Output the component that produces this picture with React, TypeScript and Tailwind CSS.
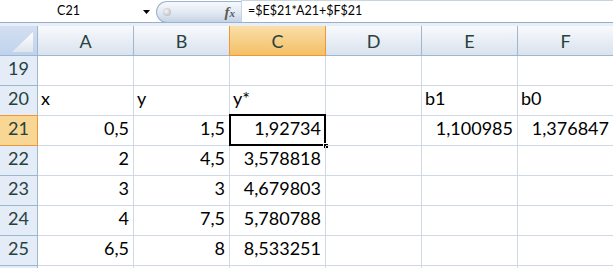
const cols = ["A", "B", "C", "D", "E", "F"];

const rows: { n: number; cells: string[] }[] = [
  { n: 19, cells: ["", "", "", "", "", ""] },
  { n: 20, cells: ["x", "y", "y*", "", "b1", "b0"] },
  { n: 21, cells: ["0,5", "1,5", "1,92734", "", "1,100985", "1,376847"] },
  { n: 22, cells: ["2", "4,5", "3,578818", "", "", ""] },
  { n: 23, cells: ["3", "3", "4,679803", "", "", ""] },
  { n: 24, cells: ["4", "7,5", "5,780788", "", "", ""] },
  { n: 25, cells: ["6,5", "8", "8,533251", "", "", ""] },
];

const isNum = (s: string) => /^[\d,]+$/.test(s);

function FormulaBar() {
  return (
    <div className="flex h-[23px] border-b border-[#9aafca] bg-white">
      <div className="flex w-[156px] shrink-0 items-center">
        <div className="w-[137px] text-center text-[12.5px] text-black">C21</div>
        <svg width="7" height="4" viewBox="0 0 7 4" className="ml-[6px] mt-[1px]">
          <polygon points="0,0 7,0 3.5,4" fill="#000" />
        </svg>
      </div>
      <div className="relative mt-[1px] flex h-[22px] w-[85px] shrink-0 items-center rounded-l-[11px] border border-r-0 border-[#9fb2cb] bg-linear-to-b from-[#f6f9fc] via-[#e3eaf4] to-[#c5d3e6]">
        <div className="ml-[6px] h-[8px] w-[8px] rounded-full bg-[radial-gradient(circle_at_40%_40%,#f6f6f6,#a9adb3)]" />
        <div className="ml-auto mr-[6px] font-['Liberation_Serif',serif] text-[15px] font-bold italic leading-none text-[#5a5a5a]">
          f<span className="text-[11px]">x</span>
        </div>
      </div>
      <div className="flex flex-1 items-center border-t border-l border-[#c9d4e3] pl-[6px] text-[12.5px] text-black">
        =$E$21*A21+$F$21
      </div>
    </div>
  );
}

function HeaderRow() {
  return (
    <div className="flex h-[30px]">
      <div className="relative w-[38px] shrink-0 border-r border-b border-[#9eb6ce] bg-linear-to-b from-[#d3e0f2] to-[#c0d2ec]">
        <svg width="21" height="20" viewBox="0 0 21 20" className="absolute right-[4px] bottom-[3px]">
          <defs>
            <linearGradient id="tri" x1="0" y1="0" x2="0" y2="1">
              <stop offset="0" stopColor="#ffffff" />
              <stop offset="1" stopColor="#dfe5ee" />
            </linearGradient>
          </defs>
          <polygon points="21,0 21,20 0,20" fill="url(#tri)" />
        </svg>
      </div>
      {cols.map((c) => {
        const sel = c === "C";
        return (
          <div
            key={c}
            className={
              "flex w-[96px] shrink-0 items-center justify-center border-r border-b pt-[2px] text-[18px] " +
              (sel
                ? "border-[#f29536] bg-linear-to-b from-[#fadea8] to-[#f3c065] text-[#27413e]"
                : c === "B"
                ? "border-r-[#f29536] border-b-[#9eb6ce] bg-linear-to-b from-[#f8fafd] to-[#d9e2ee] text-[#27413e]"
                : "border-[#9eb6ce] bg-linear-to-b from-[#f8fafd] to-[#d9e2ee] text-[#27413e]")
            }
          >
            {c}
          </div>
        );
      })}
    </div>
  );
}

function Row({ n, cells }: { n: number; cells: string[] }) {
  const sel = n === 21;
  return (
    <div className="flex h-[30px] shrink-0">
      <div
        className={
          "flex w-[38px] shrink-0 items-end justify-center border-r border-b pb-[6px] text-[18px] leading-[22px] text-[#27413e] " +
          (sel
            ? "border-[#f29536] bg-[#f8d693]"
            : n === 20
            ? "border-r-[#9eb6ce] border-b-[#f29536] bg-[#e4ecf7]"
            : "border-[#9eb6ce] bg-[#e4ecf7]")
        }
      >
        {n}
      </div>
      {cells.map((v, i) => (
        <div
          key={i}
          className={
            "relative flex w-[96px] shrink-0 items-end border-r border-b border-[#d0d7e5] pb-[6px] text-[18px] leading-[22px] text-black " +
            (isNum(v) ? "justify-end pr-[4px]" : "justify-start pl-[3px]")
          }
        >
          {v}
          {sel && i === 2 && (
            <>
              <div className="pointer-events-none absolute -top-[2px] -left-[1px] -right-[1px] -bottom-[1px] border-2 border-black" />
              <div className="absolute -right-[4px] -bottom-[4px] h-[6px] w-[6px] border border-white bg-black" />
            </>
          )}
        </div>
      ))}
    </div>
  );
}

export default function App() {
  return (
    <div className="h-[268px] w-[613px] overflow-hidden bg-white font-[Lato,'Open_Sans',sans-serif]">
      <FormulaBar />
      <div className="h-[3px] bg-[#e8eef6]" />
      <HeaderRow />
      {rows.map((r) => (
        <Row key={r.n} n={r.n} cells={r.cells} />
      ))}
      <div className="flex h-[30px]">
        <div className="w-[38px] shrink-0 border-r border-[#9eb6ce] bg-[#e4ecf7]" />
        {cols.map((c) => (
          <div key={c} className="w-[96px] shrink-0 border-r border-[#d0d7e5]" />
        ))}
      </div>
    </div>
  );
}
